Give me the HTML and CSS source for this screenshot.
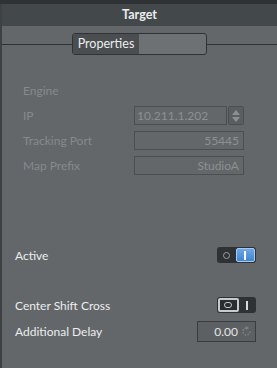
FILE: index.html
```html
<!DOCTYPE html>
<html lang="en">
<head>
    <meta charset="UTF-8">
    <title>Target</title>
    <link rel="stylesheet" href="styles.css">
</head>
<body>
    <div class="panel">
        <div class="header">Target</div>
        <div class="content">
            <div class="tabs">
                <div class="tab-group">
                    <div class="tab active">Properties</div>
                    <div class="tab"></div>
                </div>
            </div>

            <div class="section disabled">
                <div class="row section-title">Engine</div>
                <div class="row">
                    <span class="label">IP</span>
                    <div class="field-spin">
                        <div class="field left">10.211.1.202</div>
                        <div class="spinner">
                            <svg width="10" height="16" viewBox="0 0 10 16">
                                <path d="M1 7 L5 2 L9 7 Z" fill="#8c9093"/>
                                <path d="M1 9 L5 14 L9 9 Z" fill="#8c9093"/>
                            </svg>
                        </div>
                    </div>
                </div>
                <div class="row">
                    <span class="label">Tracking Port</span>
                    <div class="field">55445</div>
                </div>
                <div class="row">
                    <span class="label">Map Prefix</span>
                    <div class="field">StudioA</div>
                </div>
            </div>

            <div class="section options">
                <div class="row">
                    <span class="label">Active</span>
                    <div class="toggle on">
                        <span class="half off-half"><span class="ring"></span></span>
                        <span class="half on-half"><span class="bar"></span></span>
                    </div>
                </div>
            </div>

            <div class="section options second">
                <div class="row">
                    <span class="label">Center Shift Cross</span>
                    <div class="toggle off">
                        <span class="half off-half"><span class="ring"></span></span>
                        <span class="half on-half"><span class="bar"></span></span>
                    </div>
                </div>
                <div class="row">
                    <span class="label">Additional Delay</span>
                    <div class="field delay">
                        0.00
                        <svg width="11" height="11" viewBox="0 0 11 11">
                            <path d="M9 5.5 A3.5 3.5 0 1 1 5.5 2" fill="none" stroke="#7c8083" stroke-width="1.4" stroke-dasharray="1.6 1.2"/>
                            <path d="M5 0 L8 2 L5 4 Z" fill="#7c8083"/>
                        </svg>
                    </div>
                </div>
            </div>
        </div>
    </div>
</body>
</html>
```

FILE: styles.css
```css
body {
    margin: 0;
    background: #2e3235;
    font-family: 'Lato', 'Open Sans', sans-serif;
    font-size: 12px;
    color: #e4e5e6;
}
.panel {
    margin-top: 4px;
    height: 364px;
    border-left: 2px solid #3d4144;
    background: #63676a;
    box-sizing: border-box;
}
.header {
    height: 22px;
    line-height: 22px;
    background: #43484b;
    text-align: center;
    font-weight: bold;
    font-size: 12.5px;
    color: #eceded;
}
.content {
    padding: 0 21px 0 13px;
}
.tabs {
    display: flex;
    align-items: center;
    margin: 7px -21px 0 -13px;
}
.tabs::before,
.tabs::after {
    content: "";
    flex: 1;
    height: 1px;
    background: #2f3336;
}
.tab-group {
    display: flex;
    width: 133px;
    height: 20px;
    border: 1px solid #2f3336;
    border-radius: 3px;
    overflow: hidden;
    background: #6d7174;
}
.tab {
    flex: 1;
    line-height: 20px;
}
.tab.active {
    flex: none;
    width: 66px;
    background: #4a4e51;
    text-align: center;
    color: #eceded;
    font-size: 12.5px;
}
.row {
    display: flex;
    align-items: center;
    justify-content: space-between;
    height: 25px;
}
.disabled {
    margin-top: 22px;
    padding: 0 12px 0 8px;
    color: #868a8d;
}
.section-title {
    height: 26px;
}
.field-spin {
    display: flex;
    gap: 1px;
}
.field {
    width: 110px;
    height: 19px;
    line-height: 17px;
    border: 1px solid #4b4f52;
    box-sizing: border-box;
    padding: 0 4px;
    text-align: right;
    color: #8c9093;
}
.field.left {
    width: 93px;
    text-align: left;
    padding-left: 2px;
}
.spinner {
    width: 16px;
    height: 19px;
    border: 1px solid #4b4f52;
    border-radius: 2px;
    box-sizing: border-box;
    background: #5a5e61;
    display: flex;
    align-items: center;
    justify-content: center;
}
.options {
    margin-top: 64px;
}
.options .row {
    height: 26px;
}
.second {
    margin-top: 24px;
}
.options .label {
    color: #eceded;
}
.toggle {
    display: flex;
    width: 39px;
    height: 16px;
    background: #2f3235;
    border-radius: 3px;
    padding: 1px;
    box-sizing: border-box;
}
.half {
    flex: 1;
    display: flex;
    align-items: center;
    justify-content: center;
    border-radius: 2px;
    box-sizing: border-box;
}
.ring {
    width: 5px;
    height: 5px;
    border: 1.5px solid #9a9ea1;
    border-radius: 50%;
}
.bar {
    width: 2px;
    height: 9px;
    background: #d8d9da;
}
.toggle.on .on-half {
    background: linear-gradient(#6ea8e6, #3f84d0);
    border: 1px solid #a9c9ee;
}
.toggle.on .bar {
    background: #fff;
}
.toggle.off .off-half {
    background: #2a2d30;
    border: 2px solid #c8c9ca;
}
.toggle.off .ring {
    width: 6px;
    height: 4px;
    border-color: #c8c9ca;
    border-radius: 3px;
}
.delay {
    width: 59px;
    height: 21px;
    border: 1px solid #393d40;
    background: #5c6063;
    color: #e4e5e6;
    display: flex;
    align-items: center;
    justify-content: flex-end;
    gap: 3px;
    padding: 0 3px;
}
```
